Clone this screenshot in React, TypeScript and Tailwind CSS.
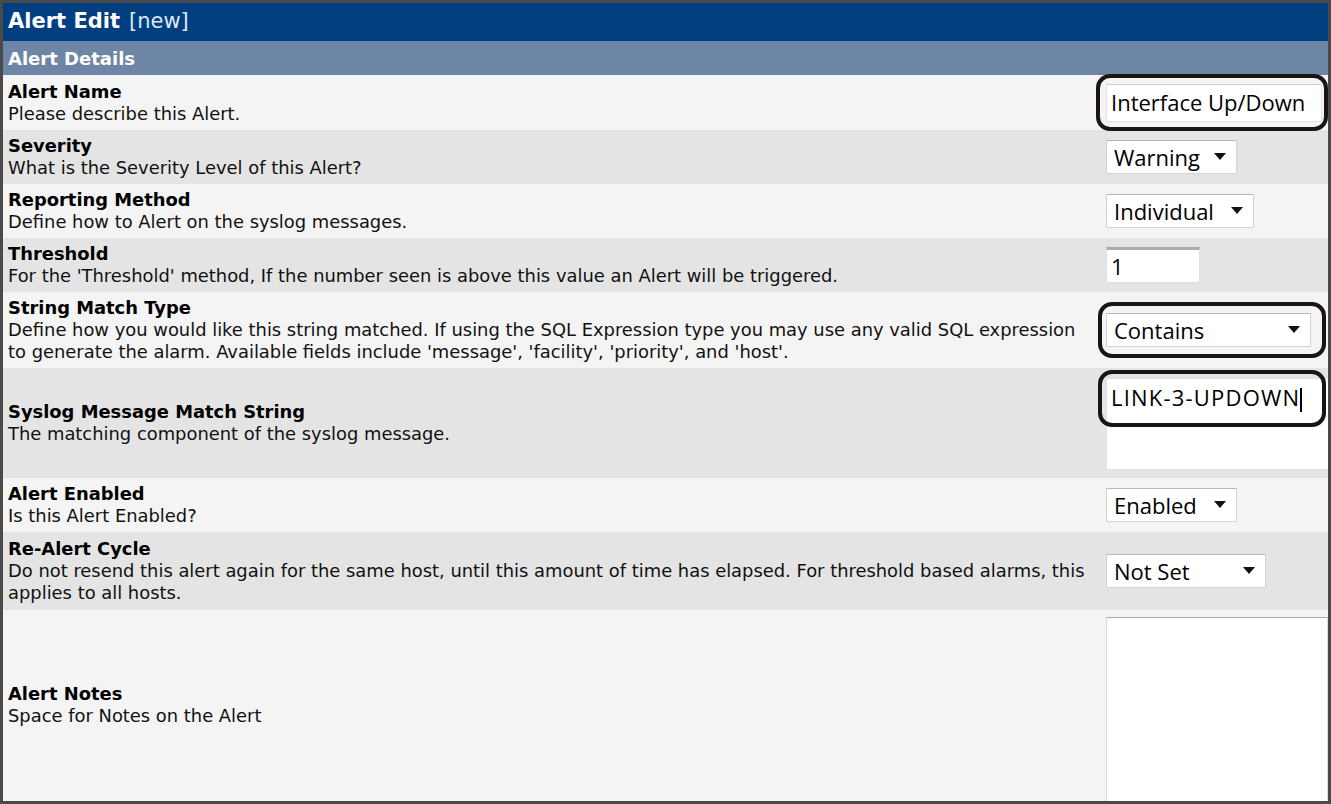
import { ReactNode } from 'react';

const labelFont = { fontFamily: '"DejaVu Sans", Verdana, sans-serif' };
const ctrlFont = { fontFamily: '"Open Sans", "Segoe UI", sans-serif' };

function Arrow() {
  return (
    <svg width="12" height="8" viewBox="0 0 12 8" className="shrink-0">
      <path d="M0 0 L12 0 L6 7 Z" fill="#111" />
    </svg>
  );
}

function Select({ value, width }: { value: string; width: string }) {
  return (
    <div
      className={`${width} h-[34px] bg-white border border-[#d4d4d4] border-t-[#b8b8b8] flex items-center justify-between pl-[7px] pr-[10px] text-[22px] text-black`}
      style={ctrlFont}
    >
      <span className="leading-none">{value}</span>
      <Arrow />
    </div>
  );
}

function Mark({ className }: { className: string }) {
  return <span className={`absolute border-[4px] border-[#1a1412] rounded-[14px] pointer-events-none ${className}`} />;
}

function Row({
  title,
  desc,
  dark,
  h,
  top,
  children,
}: {
  title: string;
  desc: ReactNode;
  dark?: boolean;
  h: string;
  top?: boolean;
  children: ReactNode;
}) {
  return (
    <div className={`flex shrink-0 ${h} ${dark ? 'bg-[#e4e4e4]' : 'bg-[#f4f4f4]'}`}>
      <div className="flex-1 flex flex-col justify-center pl-[5px] pr-3 text-[17.9px] leading-[22px] text-[#111]" style={labelFont}>
        <div className="font-bold text-black">{title}</div>
        <div>{desc}</div>
      </div>
      <div className={`w-[231px] pl-[9px] flex ${top ? 'items-start pt-[10px]' : 'items-center'}`}>{children}</div>
    </div>
  );
}

export default function App() {
  return (
    <div className="w-[1331px] h-[804px] bg-white overflow-hidden">
      <div className="h-[804px] border-[3px] border-[#4a4a4a] flex flex-col overflow-hidden bg-[#f4f4f4]">
        <div className="h-[38px] shrink-0 bg-[#023f80] flex items-center pl-[5px] text-white text-[21px]" style={labelFont}>
          <span className="font-bold">Alert Edit</span>
          <span className="ml-[9px] text-[#dfe6f0]">[new]</span>
        </div>
        <div className="h-[34px] shrink-0 bg-[#6e86a6] flex items-center pl-[5px] text-white text-[18px] font-bold" style={labelFont}>
          Alert Details
        </div>

        <Row title="Alert Name" desc="Please describe this Alert." h="h-[55px]">
          <div className="relative">
            <div
              className="w-[216px] h-[38px] bg-white border border-[#e2e2e2] border-t-[#cfcfcf] flex items-center pl-[4px] text-[22px] text-black"
              style={ctrlFont}
            >
              Interface Up/Down
            </div>
            <Mark className="-left-[10px] -top-[10px] -right-[6px] -bottom-[9px]" />
          </div>
        </Row>

        <Row title="Severity" desc="What is the Severity Level of this Alert?" dark h="h-[54px]">
          <Select value="Warning" width="w-[131px]" />
        </Row>

        <Row title="Reporting Method" desc="Define how to Alert on the syslog messages." h="h-[54px]">
          <Select value="Individual" width="w-[148px]" />
        </Row>

        <Row
          title="Threshold"
          desc="For the 'Threshold' method, If the number seen is above this value an Alert will be triggered."
          dark
          h="h-[54px]"
        >
          <div
            className="w-[94px] h-[36px] bg-white border border-[#e0e0e0] border-t-[3px] border-t-[#ababab] flex items-center pl-[4px] text-[22px] text-black"
            style={ctrlFont}
          >
            1
          </div>
        </Row>

        <Row
          title="String Match Type"
          desc={
            <>
              Define how you would like this string matched. If using the SQL Expression type you may use any valid SQL expression
              <br />
              to generate the alarm. Available fields include 'message', 'facility', 'priority', and 'host'.
            </>
          }
          h="h-[76px]"
        >
          <div className="relative">
            <Select value="Contains" width="w-[205px]" />
            <Mark className="-left-[8px] -top-[11px] -right-[15px] -bottom-[11px]" />
          </div>
        </Row>

        <Row title="Syslog Message Match String" desc="The matching component of the syslog message." dark h="h-[110px]" top>
          <div className="relative">
            <div
              className="w-[225px] h-[92px] bg-white border border-[#e2e2e2] pl-[4px] pt-[3px] text-[22px] tracking-[1.2px] text-black leading-[30px]"
              style={ctrlFont}
            >
              LINK-3-UPDOWN<span className="inline-block w-[2px] h-[24px] bg-black align-middle" />
            </div>
            <Mark className="-left-[8px] -top-[8px] w-[228px] h-[57px]" />
          </div>
        </Row>

        <Row title="Alert Enabled" desc="Is this Alert Enabled?" h="h-[54px]">
          <Select value="Enabled" width="w-[131px]" />
        </Row>

        <Row
          title="Re-Alert Cycle"
          desc={
            <>
              Do not resend this alert again for the same host, until this amount of time has elapsed. For threshold based alarms, this
              <br />
              applies to all hosts.
            </>
          }
          dark
          h="h-[78px]"
        >
          <Select value="Not Set" width="w-[160px]" />
        </Row>

        <div className="flex flex-1 min-h-0 overflow-hidden bg-[#f4f4f4]">
          <div className="flex-1 flex flex-col justify-center pl-[5px] pb-[2px] text-[17.9px] leading-[22px] text-[#111]" style={labelFont}>
            <div className="font-bold text-black">Alert Notes</div>
            <div>Space for Notes on the Alert</div>
          </div>
          <div className="w-[231px] pl-[9px] pt-[7px]">
            <div className="w-full h-[200px] bg-white border border-[#dcdcdc] border-t-[#a8a8a8]" />
          </div>
        </div>
      </div>
    </div>
  );
}
